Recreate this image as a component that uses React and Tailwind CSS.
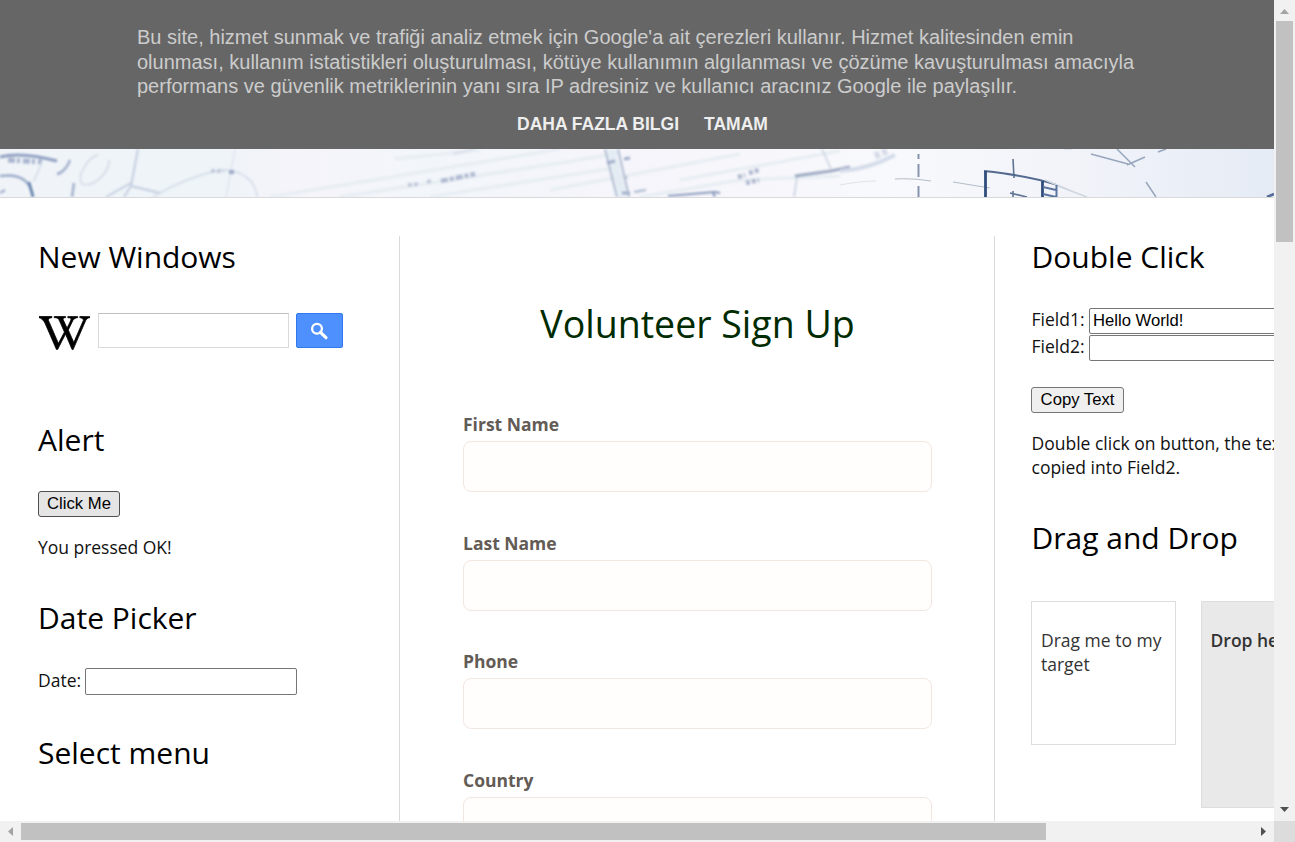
import { FaWikipediaW } from "react-icons/fa";

const SANS = "font-['Open_Sans',sans-serif]";
const ARIAL = "font-['Liberation_Sans',Arial,sans-serif]";

function Heading({ children, className = "" }) {
  return (
    <h2 className={`h-[42px] whitespace-nowrap text-[30px] leading-[42px] text-black ${className}`}>
      {children}
    </h2>
  );
}

function CookieNotice() {
  return (
    <div className={`h-[149px] shrink-0 bg-[#666] pl-[137px] pt-[25px] ${ARIAL}`}>
      <div className="whitespace-nowrap text-[20px] leading-[24.5px] text-[#ccc]">
        <p>Bu site, hizmet sunmak ve trafiği analiz etmek için Google'a ait çerezleri kullanır. Hizmet kalitesinden emin</p>
        <p>olunması, kullanım istatistikleri oluşturulması, kötüye kullanımın algılanması ve çözüme kavuşturulması amacıyla</p>
        <p>performans ve güvenlik metriklerinin yanı sıra IP adresiniz ve kullanıcı aracınız Google ile paylaşılır.</p>
      </div>
      <div className="mt-[13px] flex gap-[25px] whitespace-nowrap pl-[380px] text-[17.5px] font-bold leading-6 text-[#eee]">
        <a>DAHA FAZLA BILGI</a>
        <a>TAMAM</a>
      </div>
    </div>
  );
}

function Blueprint() {
  return (
    <svg className="block h-12 w-[1274px] shrink-0" viewBox="0 149 1274 48" fill="none">
      <defs>
        <linearGradient id="sky" x1="0" x2="1" y1="0" y2="0">
          <stop offset="0" stopColor="#f0f4f8" />
          <stop offset=".17" stopColor="#eef4f8" />
          <stop offset=".23" stopColor="#f5f4fa" />
          <stop offset=".34" stopColor="#f2f6fa" />
          <stop offset=".5" stopColor="#f6f5fb" />
          <stop offset=".7" stopColor="#f8f9fc" />
          <stop offset=".85" stopColor="#f1f3f9" />
          <stop offset="1" stopColor="#e5ebf5" />
        </linearGradient>
        <filter id="soft" x="-5%" y="-20%" width="110%" height="140%" colorInterpolationFilters="sRGB"><feGaussianBlur stdDeviation="1.1" /></filter>
        <filter id="fine" x="-5%" y="-20%" width="110%" height="140%" colorInterpolationFilters="sRGB"><feGaussianBlur stdDeviation=".4" /></filter>
      </defs>
      <rect y="149" width="1274" height="48" fill="url(#sky)" />
      <g filter="url(#soft)">
        <g stroke="#e6edf2" strokeWidth="3">
          <path d="M270 197L410 174L560 149M340 197L560 163L620 153M430 197L620 167M550 190L740 154M640 197L740 180L840 176M395 159L480 150M680 180L840 151" />
        </g>
        <path d="M0 157C15 153 35 155 57 161" stroke="#8fa0c2" strokeWidth="3" />
        <path d="M8 160L42 162" stroke="#a9b5d0" strokeWidth="5" strokeDasharray="7 2 3 3" />
        <path d="M0 176C14 174 30 176 33 197" stroke="#9babc9" strokeWidth="2.5" />
        <path d="M29 182L33 197" stroke="#5f7cab" strokeWidth="2.5" />
        <path d="M0 193L5 190M57 174C63 173 68 166 70 160M74 183L72 197" stroke="#a4b1cd" strokeWidth="2.5" />
        <path d="M42 162L34 181M98 155C88 157 76 177 82 184C96 188 110 170 109 160" stroke="#d6dce9" strokeWidth="1.8" />
        <path d="M138 149L131 186L124 197M131 186L160 193M106 197L131 183" stroke="#c4cde0" strokeWidth="2" />
        <path d="M235 149L226 197" stroke="#dfe4ef" strokeWidth="1.5" />
        <path d="M153 197C174 184 197 175 220 170C242 169 256 181 257 197" stroke="#d2dae7" strokeWidth="1.5" />
        <path d="M211 171L224 171M408 185L419 184M427 182L431 181" stroke="#bec7da" strokeWidth="3.5" strokeDasharray="4 2" />
        <path d="M229 172L234 172" stroke="#9da9c7" strokeWidth="4" />
        <path d="M441 181L475 174" stroke="#b0bad1" strokeWidth="4.5" strokeDasharray="7 2 4 2" />
        <path d="M453 154L474 149" stroke="#dde2ec" strokeWidth="3" />
        <path d="M611 149L623 197" stroke="#e3ecf3" strokeWidth="8" />
        <path d="M605 149L617 197M618 149L629 197" stroke="#b1bdd2" strokeWidth="2" />
        <path d="M607 163L615 161M624 159L630 158M622 193L630 193" stroke="#a1afcb" strokeWidth="3" />
        <path d="M612 180V178M626 179V176M634 192L646 190" stroke="#b7c2d6" strokeWidth="2.5" />
        <path d="M668 196L715 192L720 193M713 193L715 197" stroke="#8799ba" strokeWidth="2" />
        <path d="M738 177L745 175M749 173L759 170M746 183L759 180" stroke="#afb8ce" strokeWidth="4.500" strokeDasharray="4 2" />
        <path d="M797 177L794 197M822 149L831 169" stroke="#ced5e2" strokeWidth="1.8" />
        <path d="M795 176L831 171L850 167" stroke="#9eaac2" strokeWidth="3" />
        <path d="M840 171C858 170 878 164 895 155" stroke="#d3dbe9" strokeWidth="4" />
        <path d="M875 156L889 150" stroke="#d5dbe8" strokeWidth="7" strokeDasharray="5 3" />
      </g>
      <g filter="url(#fine)" stroke="#8793ad" strokeWidth="2">
        <path d="M918.500 154V159M918.500 164V177M918.500 186V197" />
        <path d="M895 179Q912 178 931 181M953 182L990 188" stroke="#b4bdc8" strokeWidth="1.2" />
        <path d="M840 185Q860 181 876 181" stroke="#e0e4e9" strokeWidth="1.2" />
        <path d="M1013 159L1014 178M1013 191V197M1010 193L1027 197" stroke="#5f7394" strokeWidth="1.6" />
        <path d="M984 171Q1030 176 1057 185" stroke="#54698f" strokeWidth="1.8" />
        <path d="M1058 186L1087 197M1045 180L1074 192" stroke="#d0d6df" strokeWidth="1.5" />
        <path d="M985.500 171V197M1042.500 181V197" stroke="#304e7c" strokeWidth="2.8" />
        <path d="M1056.500 185V197M1043 187L1056 190M1043 194L1056 197" stroke="#5c75a0" strokeWidth="2" />
        <path d="M1091 154L1128 164M1117 149L1135 167M1127 165L1145 157M1158 152L1166 149M1146 182L1156 197" stroke="#97a6bd" strokeWidth="1.500" />
        <path d="M1267 197L1274 194" stroke="#526b98" strokeWidth="2.500" />
        <path d="M1064 149H1072" stroke="#c9d1df" strokeWidth="1" />
      </g>
    </svg>
  );
}

function LeftColumn() {
  return (
    <section className="flex h-[586px] w-[400px] shrink-0 flex-col items-start border-r border-[#dadada] pl-[38px]">
      <Heading className="tracking-[-0.02px]">New Windows</Heading>
      <div className="mt-[35px] flex h-[38px] items-start">
        <FaWikipediaW className="-mt-[1px] h-[42px] w-[52px] stroke-black pl-px text-black [stroke-width:10px]" />
        <input className="ml-2 h-[35px] w-[191px] border border-[#d9d9d9] border-t-[#c0c0c0] bg-white" />
        <button className="ml-[7px] flex h-[35px] w-[47px] items-center justify-center rounded-[2px] border border-[#3079ed] bg-[#4d90fe] pr-[2px]">
          <svg className="h-5 w-5" viewBox="0 0 20 20" fill="none" stroke="#fff">
            <circle cx="8" cy="7.700" r="4.9" strokeWidth="2.3" />
            <path d="M11.500 11.300L17 16.700" strokeWidth="3.2" strokeLinecap="round" />
          </svg>
        </button>
      </div>
      <Heading className="mt-[68px]">Alert</Heading>
      <button className={`mt-[30px] h-[26px] w-[82px] rounded-[3px] border border-[#4f4f4f] bg-[#e5e5e5] text-[16.67px] leading-[22px] whitespace-nowrap text-black ${ARIAL}`}>Click Me</button>
      <p className="mt-[18px] whitespace-nowrap text-[17.5px] leading-6 tracking-[-0.03px] text-[#111]">You pressed OK!</p>
      <Heading className="mt-[38px]">Date Picker</Heading>
      <div className="mt-[29px] flex items-start gap-[5px]">
        <label className="w-[42px] whitespace-nowrap text-[17.5px] leading-6 text-[#111]">Date:</label>
        <input className="h-[27px] w-[212px] rounded-[2px] border border-[#767676] bg-white" />
      </div>
      <Heading className="mt-[37px]">Select menu</Heading>
    </section>
  );
}

function SignUpForm() {
  return (
    <section className="h-[586px] w-[595px] shrink-0 overflow-hidden border-r border-[#dadada] pl-[63px] pr-[62px]">
      <h1 className="mt-[60px] h-14 whitespace-nowrap text-center text-[37.5px] leading-[56px] text-[#002b00]">Volunteer Sign Up</h1>
      <div className="mt-[60px] flex flex-col gap-[38.7px]">
        {["First Name", "Last Name", "Phone", "Country"].map((label) => (
          <div key={label} className="flex flex-col">
            <label className="h-[29px] text-[17.5px] font-bold leading-6 text-[#635b55]">{label}</label>
            <input className="h-[51px] w-[469px] rounded-[8px] border border-[#f3e6df] bg-[#fffefd]" />
          </div>
        ))}
      </div>
    </section>
  );
}

function RightColumn() {
  return (
    <section className="flex h-[586px] w-[400px] shrink-0 flex-col items-start pl-[36px]">
      <Heading className="pl-[0.5px]">Double Click</Heading>
      <div className="mt-[30px] flex flex-col gap-px text-[17.5px] leading-[22px] text-[#111]">
        <div className="flex items-start">
          <label className="w-[58px] whitespace-nowrap pl-[0.5px]">Field1:</label>
          <input defaultValue="Hello World!" className={`h-[26px] w-[240px] rounded-[2px] border border-[#767676] bg-white px-[3px] text-[16.67px] text-black ${ARIAL}`} />
        </div>
        <div className="flex items-start">
          <label className="w-[58px] whitespace-nowrap pl-[0.5px]">Field2:</label>
          <input className="h-[26px] w-[240px] rounded-[2px] border border-[#767676] bg-white" />
        </div>
      </div>
      <button className={`mt-[26px] h-[26px] w-[93px] rounded-[3px] border border-[#767676] bg-[#efefef] text-[16.67px] leading-[22px] whitespace-nowrap text-black ${ARIAL}`}>Copy Text</button>
      <div className="mt-[18px] whitespace-nowrap pl-[0.5px] text-[17.5px] leading-6 text-[#111]">
        <p>Double click on button, the text will be</p>
        <p>copied into Field2.</p>
      </div>
      <Heading className="mt-[38px] pl-[0.5px]">Drag and Drop</Heading>
      <div className="mt-[42px] flex items-start gap-[25px] whitespace-nowrap text-[17.5px] leading-6">
        <div className="h-[144px] w-[145px] border border-[#ddd] bg-white pl-[9px] pt-[26px] text-[#333]">
          <p>Drag me to my</p>
          <p>target</p>
        </div>
        <div className="h-[207px] w-[190px] border border-[#ddd] bg-[#e9e9e9] pl-[8.5px] pt-[26px] font-semibold text-[#333]">Drop here</div>
      </div>
    </section>
  );
}

function VerticalScrollbar() {
  return (
    <div className="flex h-[821px] w-[21px] flex-col items-center bg-[#f1f1f1]">
      <svg className="block h-[21px] w-[21px] shrink-0" viewBox="0 0 21 21"><path d="M6 14H15L10.500 9Z" fill="#a3a3a3" /></svg>
      <div className="h-[221px] w-[17px] bg-[#c1c1c1]" />
      <svg className="mt-auto block h-[21px] w-[21px] shrink-0" viewBox="0 0 21 21"><path d="M6 7H15L10.500 12Z" fill="#505050" /></svg>
    </div>
  );
}

function HorizontalScrollbar() {
  return (
    <div className="flex h-[21px] w-[1274px] items-center bg-[#f1f1f1]">
      <svg className="block h-[21px] w-[21px] shrink-0" viewBox="0 0 21 21"><path d="M13 6V15L8 10.500Z" fill="#a3a3a3" /></svg>
      <div className="h-[17px] w-[1025px] bg-[#c1c1c1]" />
      <svg className="ml-auto block h-[21px] w-[21px] shrink-0" viewBox="0 0 21 21"><path d="M8 6V15L13 10.500Z" fill="#505050" /></svg>
    </div>
  );
}

export default function App() {
  return (
    <div className={`grid h-[842px] w-[1295px] grid-cols-[1274px_21px] grid-rows-[821px_21px] overflow-hidden bg-white ${SANS}`}>
      <div className="flex h-[821px] w-[1274px] flex-col overflow-hidden">
        <CookieNotice />
        <Blueprint />
        <div className="h-px shrink-0 bg-[#d9d9d9]" />
        <main className="mt-[38px] flex">
          <LeftColumn />
          <SignUpForm />
          <RightColumn />
        </main>
      </div>
      <VerticalScrollbar />
      <HorizontalScrollbar />
      <div className="bg-[#dcdcdc]" />
    </div>
  );
}
